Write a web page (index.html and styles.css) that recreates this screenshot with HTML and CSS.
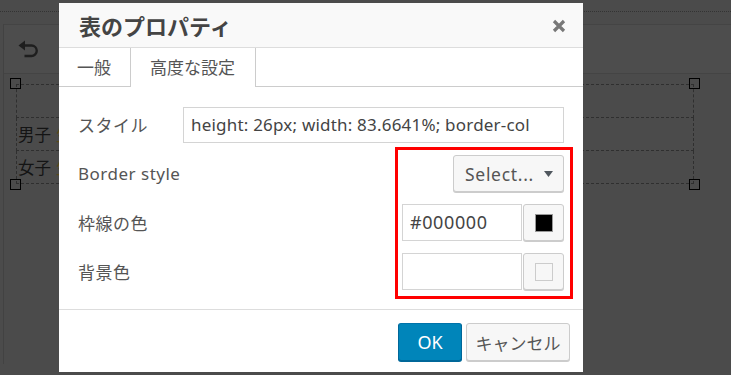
FILE: index.html
```html
<!DOCTYPE html>
<html lang="ja">
<head>
    <meta charset="UTF-8">
    <meta name="viewport" content="width=device-width, initial-scale=1.0">
    <title>表のプロパティ</title>
    <link rel="stylesheet" href="styles.css">
</head>
<body>

    <div class="editor">
        <div class="menubar"></div>
        <div class="workspace">
            <div class="toolbar">
                <span class="tool-btn">
                    <svg width="21" height="18" viewBox="0 0 21 18">
                        <path d="M0.5 5.5 L7 0.5 L7 10.5 Z" fill="#1e1e1e"/>
                        <path d="M6 5.5 H13.5 A5.2 5.2 0 0 1 13.5 16 H6.5" fill="none" stroke="#1e1e1e" stroke-width="2.4"/>
                    </svg>
                </span>
            </div>
            <div class="content">
                <div class="table-wrap">
                    <table class="doc-table">
                        <tr><td></td></tr>
                        <tr><td>男子<span class="hl">生</span></td></tr>
                        <tr><td>女子<span class="hl">生</span></td></tr>
                    </table>
                    <span class="handle tl"></span>
                    <span class="handle tr"></span>
                    <span class="handle bl"></span>
                    <span class="handle br"></span>
                </div>
            </div>
        </div>
    </div>

    <div class="dialog">
        <div class="dialog-head">
            <span class="dialog-title">表のプロパティ</span>
            <svg class="close" width="14" height="14" viewBox="0 0 14 14">
                <path d="M2 2 L12 12 M12 2 L2 12" stroke="#787878" stroke-width="3.2"/>
            </svg>
        </div>

        <div class="tabs">
            <span class="tab">一般</span>
            <span class="tab active">高度な設定</span>
        </div>

        <div class="dialog-body">
            <div class="form-row">
                <label class="form-label">スタイル</label>
                <div class="text-input wide">height: 26px; width: 83.6641%; border-col</div>
            </div>
            <div class="form-row">
                <label class="form-label">Border style</label>
                <div class="select-btn">
                    <span>Select...</span>
                    <svg width="9" height="6" viewBox="0 0 9 6"><path d="M0 0 H9 L4.5 6 Z" fill="#50575e"/></svg>
                </div>
            </div>
            <div class="form-row">
                <label class="form-label">枠線の色</label>
                <div class="color-group">
                    <div class="text-input color">#000000</div>
                    <div class="swatch-btn"><span class="swatch black"></span></div>
                </div>
            </div>
            <div class="form-row">
                <label class="form-label">背景色</label>
                <div class="color-group">
                    <div class="text-input color"></div>
                    <div class="swatch-btn"><span class="swatch empty"></span></div>
                </div>
            </div>
        </div>

        <div class="dialog-foot">
            <button class="btn primary">OK</button>
            <button class="btn">キャンセル</button>
        </div>
    </div>

    <div class="highlight"></div>

</body>
</html>
```

FILE: styles.css
```css
body {
    margin: 0;
    width: 731px;
    height: 375px;
    overflow: hidden;
    position: relative;
    background-color: #4b4b4b;
    font-family: "Noto Sans", "Noto Sans CJK JP", sans-serif;
}

/* editor behind the modal */

.menubar {
    height: 11px;
    border-bottom: 1px dotted #333;
}

.workspace {
    margin-top: 12px;
    margin-left: 3px;
    border-left: 1px solid #424242;
    height: 340px;
}

.toolbar {
    height: 50px;
    box-sizing: border-box;
    border-top: 1px solid #444;
    border-bottom: 1px solid #444;
    background-color: #4d4d4d;
    padding: 15px 0 0 14px;
}

.tool-btn svg {
    display: block;
}

.content {
    padding: 10px 0 0 12px;
}

.table-wrap {
    position: relative;
    width: 678px;
}

.doc-table {
    width: 100%;
    border-collapse: collapse;
}

.doc-table td {
    height: 32px;
    padding: 0 0 0 1px;
    border: 1px dashed #2f2f2f;
    font-size: 16.5px;
    color: #141414;
    font-family: "Noto Sans CJK JP", sans-serif;
}

.doc-table .hl {
    margin-left: 5px;
    color: #5c4a16;
}

.handle {
    position: absolute;
    width: 9px;
    height: 9px;
    border: 1px solid #000;
}

.handle.tl { left: -6px; top: -6px; }
.handle.tr { right: -6px; top: -6px; }
.handle.bl { left: -6px; bottom: -6px; }
.handle.br { right: -6px; bottom: -6px; }

/* dialog */

.dialog {
    position: absolute;
    left: 59px;
    top: 3px;
    width: 524px;
    height: 369px;
    background-color: #fff;
    display: flex;
    flex-direction: column;
}

.dialog-head {
    height: 44px;
    border-bottom: 1px solid #ddd;
    background-color: #f9f9f9;
    padding: 0 17px 0 20px;
    display: flex;
    align-items: center;
    justify-content: space-between;
}

.dialog-title {
    font-size: 22px;
    font-weight: bold;
    color: #444;
    font-family: "Noto Sans CJK JP", sans-serif;
}

.close {
    margin-top: 1px;
}

.tabs {
    height: 38px;
    border-bottom: 1px solid #ccc;
    display: flex;
}

.tab {
    padding: 0 19px 0 18px;
    line-height: 38px;
    font-size: 17px;
    color: #555;
    font-family: "Noto Sans CJK JP", sans-serif;
}

.tab.active {
    padding: 0 20px 0 19px;
    height: 39px;
    border-left: 1px solid #ccc;
    border-right: 1px solid #ccc;
    background-color: #fff;
}

.dialog-body {
    padding: 19px 19px 19px 19px;
    display: flex;
    flex-direction: column;
    gap: 12px;
    border-bottom: 1px solid #ddd;
}

.form-row {
    height: 37px;
    display: flex;
    align-items: center;
}

.form-label {
    width: 105px;
    flex-shrink: 0;
    font-size: 17px;
    letter-spacing: 0.5px;
    color: #555;
}

.text-input {
    height: 36px;
    box-sizing: border-box;
    border: 1px solid #d4d4d4;
    background-color: #fff;
    padding: 0 7px;
    font-size: 17px;
    letter-spacing: 0.2px;
    line-height: 34px;
    color: #444;
    white-space: nowrap;
    overflow: hidden;
}

.text-input.wide {
    flex: 1;
}

.select-btn {
    margin-left: auto;
    width: 111px;
    height: 37px;
    box-sizing: border-box;
    border: 1px solid #ccc;
    border-radius: 3px;
    background-color: #f7f7f7;
    box-shadow: 0 1px 0 #ccc;
    display: flex;
    align-items: center;
    justify-content: space-between;
    padding: 0 10px 0 11px;
    font-size: 17.5px;
    letter-spacing: 0.7px;
    color: #555;
}

.color-group {
    margin-left: auto;
    display: flex;
    gap: 1px;
}

.text-input.color {
    width: 120px;
    height: 37px;
    line-height: 35px;
    font-size: 18px;
    letter-spacing: 0.6px;
}

.swatch-btn {
    width: 41px;
    height: 37px;
    box-sizing: border-box;
    border: 1px solid #ccc;
    border-radius: 3px;
    background-color: #f7f7f7;
    box-shadow: 0 1px 0 #ccc;
    display: flex;
    align-items: center;
    justify-content: center;
}

.swatch {
    width: 18px;
    height: 18px;
    box-sizing: border-box;
}

.swatch.black {
    background-color: #000;
    border: 1px solid #999;
}

.swatch.empty {
    border: 1px solid #ccc;
    background-color: #f7f7f7;
}

.dialog-foot {
    flex: 1;
    display: flex;
    justify-content: flex-end;
    align-items: flex-start;
    gap: 4px;
    padding: 13px 13px 0 0;
}

.btn {
    height: 38px;
    box-sizing: border-box;
    border: 1px solid #ccc;
    border-radius: 3px;
    background-color: #f7f7f7;
    box-shadow: 0 1px 0 #ccc;
    font-family: "Noto Sans CJK JP", sans-serif;
    font-size: 17px;
    color: #555;
    padding: 0 8px;
    width: 104px;
}

.btn.primary {
    width: 64px;
    background-color: #0085ba;
    border-color: #0073aa #006799 #006799;
    box-shadow: 0 1px 0 #006799;
    color: #fff;
    font-size: 18px;
    font-family: "Noto Sans", sans-serif;
}

/* red annotation box */
.highlight {
    position: absolute;
    left: 395px;
    top: 147px;
    width: 178px;
    height: 152px;
    box-sizing: border-box;
    border: 3px solid #ff0000;
}
```
